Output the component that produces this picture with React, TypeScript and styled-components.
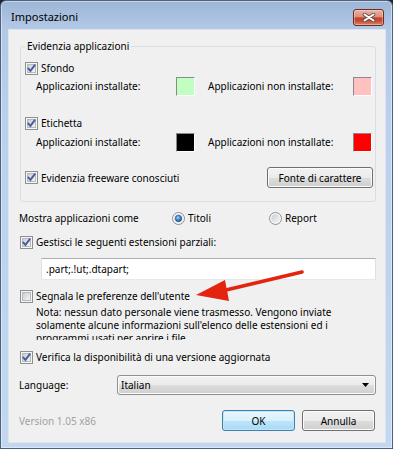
import React from 'react';
import styled, { createGlobalStyle } from 'styled-components';

const GlobalStyle = createGlobalStyle`
  html, body { margin: 0; padding: 0; background: #1e2430; }
  body {
    font-family: "Noto Sans", "Liberation Sans", sans-serif;
    font-size: 10px;
    color: #000;
  }
  #root { width: 393px; height: 449px; }
`;

const Window = styled.div`
  position: relative;
  box-sizing: border-box;
  width: 393px;
  height: 449px;
  display: flex;
  flex-direction: column;
  padding: 0 6px 5px 7px;
  border: 1px solid #4d6280;
  border-radius: 6px 6px 0 0;
  background: linear-gradient(180deg, #9db6d6 0px, #b2c9e6 28px, #bad0ec 120px, #c3d8f0 100%);
  box-shadow: inset 0 0 0 1px rgba(255, 255, 255, 0.45);
`;

const TitleBar = styled.div`
  box-sizing: border-box;
  height: 28px;
  display: flex;
  align-items: flex-start;
  justify-content: space-between;
  padding: 0 2px 0 3px;
`;

const Title = styled.span`
  margin-top: 9px;
  font-size: 11px;
  line-height: 14px;
`;

const CloseButton = styled.div`
  box-sizing: border-box;
  margin-top: 8px;
  width: 31px;
  height: 17px;
  border: 1px solid #6b2a22;
  border-radius: 3px;
  background: linear-gradient(180deg, #eab0a2 0%, #dd907e 45%, #c7442b 52%, #c34a32 70%, #dc8166 100%);
  box-shadow: inset 0 0 0 1px rgba(255, 255, 255, 0.35);
  display: flex;
  align-items: center;
  justify-content: center;
`;

const Content = styled.div`
  flex: 1;
  box-sizing: border-box;
  background: #f0f0f0;
  border: 1px solid #dbe5f1;
  display: flex;
  flex-direction: column;
  padding: 0 9px 0 11px;
`;

const Group = styled.fieldset`
  margin: 9px 0 0;
  padding: 0 2px 13px 4px;
  border: 1px solid #d5dfe5;
  border-radius: 3px;
  min-width: 0;
  display: flex;
  flex-direction: column;
`;

const Legend = styled.legend`
  padding: 0 2px;
  line-height: 14px;
`;

const CheckRow = styled.div<{ $top: number; $h?: number }>`
  display: flex;
  align-items: center;
  gap: 3px;
  margin-top: ${(p) => p.$top}px;
  height: ${(p) => p.$h ?? 14}px;
  white-space: nowrap;
`;

const ColorRow = styled.div<{ $top: number }>`
  display: flex;
  align-items: center;
  margin-top: ${(p) => p.$top}px;
  height: 20px;
  padding-left: 11px;
`;

const ColorLabel = styled.span<{ $w: number }>`
  width: ${(p) => p.$w}px;
  white-space: nowrap;
`;

const Swatch = styled.span<{ $color: string; $gap?: number }>`
  box-sizing: border-box;
  width: 19px;
  height: 19px;
  margin-right: ${(p) => p.$gap ?? 0}px;
  background: ${(p) => p.$color};
  border: 1px solid;
  border-color: #8a8a8a #ffffff #ffffff #8a8a8a;
`;

const PushButton = styled.button<{ $w: number; $default?: boolean }>`
  box-sizing: border-box;
  width: ${(p) => p.$w}px;
  height: 21px;
  padding: 0;
  font-family: inherit;
  font-size: 10px;
  color: #000;
  border: 1px solid ${(p) => (p.$default ? '#3c7fb1' : '#707070')};
  border-radius: 3px;
  background: ${(p) =>
    p.$default
      ? 'linear-gradient(180deg, #eaf6fd 0%, #d9f0fc 50%, #bee6fd 51%, #a7d9f5 100%)'
      : 'linear-gradient(180deg, #f2f2f2 0%, #ebebeb 50%, #dddddd 51%, #cfcfcf 100%)'};
  box-shadow: inset 0 0 0 1px ${(p) => (p.$default ? '#c4e5f6' : '#fbfbfb')};
`;

const RightButton = styled(PushButton)`
  margin-left: auto;
`;

const FieldRow = styled.div<{ $top: number; $h: number }>`
  display: flex;
  align-items: center;
  margin-top: ${(p) => p.$top}px;
  height: ${(p) => p.$h}px;
  white-space: nowrap;
`;

const FieldLabel = styled.span<{ $w: number }>`
  margin-left: -1px;
  width: ${(p) => p.$w}px;
`;

const RadioOption = styled.span<{ $w?: number }>`
  display: flex;
  align-items: center;
  gap: 3px;
  width: ${(p) => (p.$w ? `${p.$w}px` : 'auto')};
`;

const TextInput = styled.div`
  box-sizing: border-box;
  margin: 9px 0 0 21px;
  height: 22px;
  background: #fff;
  border: 1px solid;
  border-color: #abadb3 #dbdfe6 #e3e9ef #e2e3ea;
  display: flex;
  align-items: center;
  padding-left: 4px;
`;

const Note = styled.p`
  margin: 3px 0 0;
  padding-left: 16px;
  height: 34px;
  line-height: 13px;
  overflow: hidden;
  white-space: nowrap;
`;

const Select = styled.div`
  box-sizing: border-box;
  width: 259px;
  height: 20px;
  border: 1px solid #8e8f8f;
  border-radius: 3px;
  background: linear-gradient(180deg, #f2f2f2 0%, #ebebeb 50%, #dddddd 51%, #cfcfcf 100%);
  box-shadow: inset 0 0 0 1px #fbfbfb;
  display: flex;
  align-items: center;
  justify-content: space-between;
  padding: 0 6px 0 3px;
`;

const Footer = styled.div`
  display: flex;
  align-items: center;
  gap: 7px;
  margin-top: 15px;
  height: 21px;
  padding-right: 1px;
`;

const Version = styled.span`
  margin-left: -1px;
  margin-right: auto;
  color: #a2a2a2;
`;

const Overlay = styled.svg`
  position: absolute;
  left: -1px;
  top: -1px;
  pointer-events: none;
`;

const Box = styled.svg`
  flex: none;
  display: block;
`;

const CheckBox = ({ checked }: { checked?: boolean }) => (
  <Box width={13} height={13} viewBox="0 0 13 13">
    <defs>
      <linearGradient id="cbInner" x1="0" y1="0" x2="1" y2="1">
        <stop offset="0" stopColor="#c9cdd3" />
        <stop offset="1" stopColor="#f6f6f6" />
      </linearGradient>
    </defs>
    <rect x="0.5" y="0.5" width="12" height="12" fill="#f6f6f6" stroke="#8e8f8f" />
    <rect x="2.5" y="2.5" width="8" height="8" fill="url(#cbInner)" stroke="#b6bac0" />
    {checked && (
      <path d="M3.2 6.4 L5.4 8.9 L9.8 3.2" fill="none" stroke="#4b5e9c" strokeWidth="1.9" strokeLinecap="round" />
    )}
  </Box>
);

const Radio = ({ checked }: { checked?: boolean }) => (
  <Box width={13} height={13} viewBox="0 0 13 13">
    <defs>
      <linearGradient id="rdInner" x1="0" y1="0" x2="1" y2="1">
        <stop offset="0" stopColor="#c9cdd3" />
        <stop offset="1" stopColor="#f6f6f6" />
      </linearGradient>
      <radialGradient id="rdDot" cx="0.4" cy="0.35" r="0.7">
        <stop offset="0" stopColor="#a9dcfb" />
        <stop offset="0.5" stopColor="#3b8ad8" />
        <stop offset="1" stopColor="#1b4f95" />
      </radialGradient>
    </defs>
    <circle cx="6.5" cy="6.5" r="6" fill="#f6f6f6" stroke="#8e8f8f" />
    <circle cx="6.5" cy="6.5" r="4.2" fill="url(#rdInner)" />
    {checked && <circle cx="6.5" cy="6.5" r="3.2" fill="url(#rdDot)" stroke="#1d4c8c" strokeWidth="0.6" />}
  </Box>
);

export default function App() {
  return (
    <>
      <GlobalStyle />
      <Window>
        <TitleBar>
          <Title>Impostazioni</Title>
          <CloseButton>
            <svg width="14" height="9" viewBox="0 0 14 9">
              <path d="M2.5 1.5 L11.5 7.5 M11.5 1.5 L2.5 7.5" stroke="#5b4a48" strokeWidth="3.6" strokeLinecap="round" />
              <path d="M2.5 1.5 L11.5 7.5 M11.5 1.5 L2.5 7.5" stroke="#ffffff" strokeWidth="2" strokeLinecap="round" />
            </svg>
          </CloseButton>
        </TitleBar>
        <Content>
          <Group>
            <Legend>Evidenzia applicazioni</Legend>
            <CheckRow $top={8}>
              <CheckBox checked />
              <span>Sfondo</span>
            </CheckRow>
            <ColorRow $top={1}>
              <ColorLabel $w={140}>Applicazioni installate:</ColorLabel>
              <Swatch $color="#c0ffc0" $gap={13} />
              <ColorLabel $w={145}>Applicazioni non installate:</ColorLabel>
              <Swatch $color="#ffc0c0" />
            </ColorRow>
            <CheckRow $top={20}>
              <CheckBox checked />
              <span>Etichetta</span>
            </CheckRow>
            <ColorRow $top={2}>
              <ColorLabel $w={140}>Applicazioni installate:</ColorLabel>
              <Swatch $color="#000000" $gap={13} />
              <ColorLabel $w={145}>Applicazioni non installate:</ColorLabel>
              <Swatch $color="#ff0000" />
            </ColorRow>
            <CheckRow $top={15} $h={21}>
              <CheckBox checked />
              <span>Evidenzia freeware conosciuti</span>
              <RightButton $w={106}>Fonte di carattere</RightButton>
            </CheckRow>
          </Group>

          <FieldRow $top={8} $h={16}>
            <FieldLabel $w={153}>Mostra applicazioni come</FieldLabel>
            <RadioOption $w={97}>
              <Radio checked />
              <span>Titoli</span>
            </RadioOption>
            <RadioOption>
              <Radio />
              <span>Report</span>
            </RadioOption>
          </FieldRow>

          <CheckRow $top={9}>
            <CheckBox checked />
            <span>Gestisci le seguenti estensioni parziali:</span>
          </CheckRow>
          <TextInput>.part;.!ut;.dtapart;</TextInput>

          <CheckRow $top={9}>
            <CheckBox />
            <span>Segnala le preferenze dell'utente</span>
          </CheckRow>
          <Note>
            Nota: nessun dato personale viene trasmesso. Vengono inviate
            <br />
            solamente alcune informazioni sull'elenco delle estensioni ed i
            <br />
            programmi usati per aprire i file
          </Note>

          <CheckRow $top={10}>
            <CheckBox checked />
            <span>Verifica la disponibilità di una versione aggiornata</span>
          </CheckRow>

          <FieldRow $top={11} $h={20}>
            <FieldLabel $w={98}>Language:</FieldLabel>
            <Select>
              <span>Italian</span>
              <svg width="7" height="4" viewBox="0 0 7 4">
                <path d="M0 0 H7 L3.5 4 Z" fill="#000" />
              </svg>
            </Select>
          </FieldRow>

          <Footer>
            <Version>Version 1.05 x86</Version>
            <PushButton $w={73} $default>OK</PushButton>
            <PushButton $w={73}>Annulla</PushButton>
          </Footer>
        </Content>
        <Overlay width="393" height="449" viewBox="0 0 393 449">
          <path d="M302 272 L226 290" stroke="#e3240e" strokeWidth="3.6" strokeLinecap="round" />
          <path d="M196 295 L225 280 L229 301 Z" fill="#e3240e" />
        </Overlay>
      </Window>
    </>
  );
}
